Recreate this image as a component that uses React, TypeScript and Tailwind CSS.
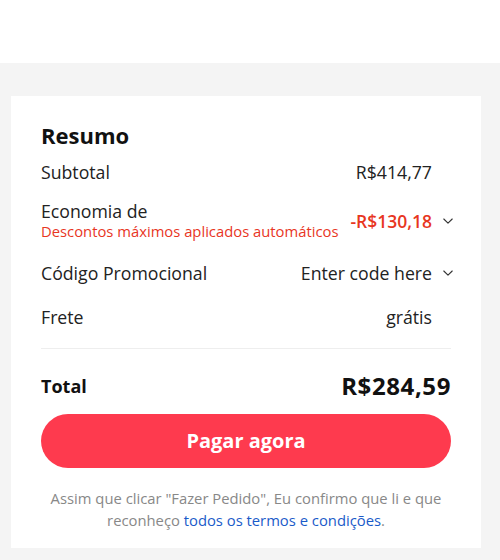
import React from 'react';

const font = { fontFamily: '"Open Sans", "Noto Sans", sans-serif' };

function Chevron() {
  return (
    <svg width="10" height="10" viewBox="0 0 10 10" fill="none" className="ml-[11px] -mr-[2px] shrink-0">
      <path d="M0.8 3l4.2 4.2L9.2 3" stroke="#333" strokeWidth="1.1" strokeLinecap="round" strokeLinejoin="round" />
    </svg>
  );
}

function Spacer() {
  return <div className="ml-[11px] -mr-[2px] w-[10px] shrink-0" />;
}

export default function App() {
  return (
    <div className="w-[500px] h-[560px] bg-white overflow-hidden" style={font}>
      <div className="h-[63px] bg-white" />
      <div className="bg-[#f4f4f4] h-[497px] pl-[11px] pr-[19px] pt-[33px]">
        <div className="bg-white h-[452px] px-[30px] pt-[24px]">
          <h2 className="text-[22px] font-bold text-[#111] leading-[30px]">Resumo</h2>

          <div className="mt-[9px] flex items-center justify-between h-[26px] text-[17.7px] text-[#222]">
            <span>Subtotal</span>
            <div className="flex items-center">
              <span className="font-medium">R$414,77</span>
              <Spacer />
            </div>
          </div>

          <div className="mt-[15px] flex items-center justify-between">
            <div className="flex flex-col">
              <span className="text-[17.7px] text-[#222] leading-[22px]">Economia de</span>
              <span className="text-[14.8px] text-[#e8361f] leading-[18px]">Descontos máximos aplicados automáticos</span>
            </div>
            <div className="flex items-center mt-[2px]">
              <span className="text-[17.5px] font-semibold text-[#e8361f]">-R$130,18</span>
              <Chevron />
            </div>
          </div>

          <div className="mt-[20px] flex items-center justify-between h-[26px] text-[17.7px] text-[#222]">
            <span>Código Promocional</span>
            <div className="flex items-center">
              <span>Enter code here</span>
              <Chevron />
            </div>
          </div>

          <div className="mt-[18px] flex items-center justify-between h-[26px] text-[17.7px] text-[#222]">
            <span>Frete</span>
            <div className="flex items-center">
              <span className="font-medium">grátis</span>
              <Spacer />
            </div>
          </div>

          <div className="mt-[18px] border-t border-[#eeeeee]" />

          <div className="mt-[22px] flex items-center justify-between h-[30px]">
            <span className="text-[18px] font-bold text-[#111]">Total</span>
            <span className="text-[24px] font-bold text-[#111] tracking-[0.6px]">R$284,59</span>
          </div>

          <button className="mt-[13px] w-full h-[54px] rounded-full bg-[#fe3a4e] text-white text-[20px] font-bold">
            Pagar agora
          </button>

          <p className="mt-[19px] text-center text-[14.8px] leading-[22px] text-[#888]">
            Assim que clicar "Fazer Pedido", Eu confirmo que li e que
            <br />
            reconheço <span className="text-[#1a5bc9]">todos os termos e condições</span>.
          </p>
        </div>
      </div>
    </div>
  );
}
